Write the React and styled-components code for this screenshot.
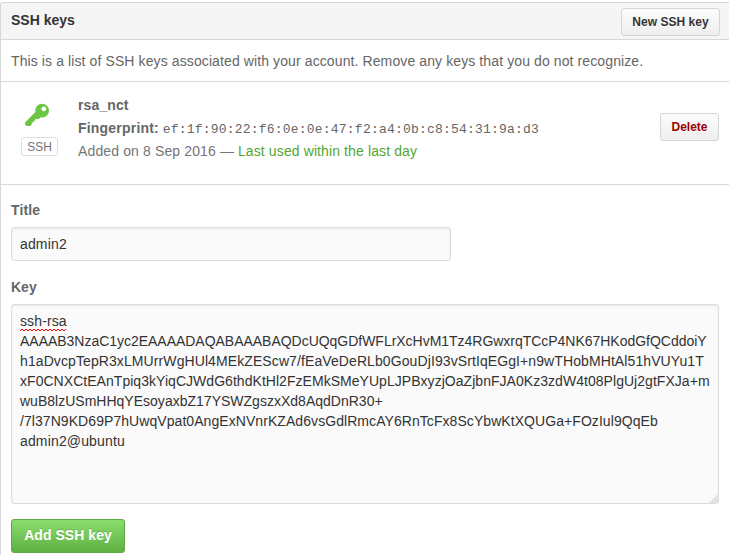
import React from "react";
import styled, { createGlobalStyle } from "styled-components";

const Global = createGlobalStyle`
  * { box-sizing: border-box; }
  body {
    margin: 0;
    background: #fff;
    overflow: hidden;
    font: 14px/23px "Liberation Sans", Arial, sans-serif;
    color: #666;
  }
`;

const Box = styled.main`
  height: 553px;
  margin-top: 2px;
  border-top: 1px solid #d8d8d8;
  border-left: 1px solid #d8d8d8;
  border-top-left-radius: 3px;
  overflow: hidden;
`;

const Header = styled.header`
  display: flex;
  justify-content: space-between;
  align-items: center;
  height: 37px;
  padding: 1px 9px 0 10px;
  background: #f5f5f5;
  border-bottom: 1px solid #d8d8d8;
`;

const Heading = styled.h1`
  margin: 0 0 2px;
  font-size: 14px;
  color: #333;
`;

const Intro = styled.p`
  margin: 0;
  height: 42px;
  padding: 0 10px;
  line-height: 42px;
  border-bottom: 1px solid #d8d8d8;
`;

const Text = styled.span`
  white-space: nowrap;
  letter-spacing: ${(p) => p.$track || 0}px;
`;

const Button = styled.button`
  width: ${(p) => p.$width}px;
  height: 28px;
  padding: 0;
  border: 1px solid #d5d5d5;
  border-radius: 3px;
  background: linear-gradient(#fcfcfc, #eee);
  color: ${(p) => (p.$danger ? "#900" : "#333")};
  font: bold 12px/20px "Liberation Sans", Arial, sans-serif;
  text-shadow: 0 1px 0 rgba(255, 255, 255, 0.9);
`;

const KeyRow = styled.section`
  display: flex;
  align-items: flex-start;
  height: 103px;
  padding: 12px 10px 0 20px;
  border-bottom: 1px solid #d8d8d8;
`;

const KeyKind = styled.div`
  display: flex;
  flex-direction: column;
  align-items: center;
  width: 37px;
  margin-right: 20px;
  padding-top: 8px;
`;

const KeyIcon = styled.svg`
  width: 24px;
  height: 27.4px;
  margin-right: 5px;
  fill: #6cc644;
`;

const Badge = styled.span`
  width: 37px;
  height: 19px;
  margin-top: 8px;
  border: 1px solid #ddd;
  border-radius: 3px;
  color: #767676;
  font-size: 12px;
  line-height: 18px;
  text-align: center;
`;

const KeyDetails = styled.div`
  flex: 1;
`;

const Detail = styled.div`
  height: 23px;
  white-space: nowrap;
`;

const Code = styled.code`
  font: 13px/20px "Liberation Mono", monospace;
  letter-spacing: 0.2px;
`;

const Muted = styled.span`
  color: #767676;
`;

const Recent = styled.span`
  color: #55a532;
`;

const DeleteSlot = styled.div`
  display: flex;
  margin-top: 19px;
`;

const Form = styled.form`
  padding: 14px 10px 0;
`;

const Label = styled.label`
  display: block;
  height: 23px;
  margin-bottom: ${(p) => p.$gap}px;
  font-weight: bold;
`;

const Input = styled.input`
  display: block;
  width: 440px;
  height: 34px;
  margin-bottom: 15px;
  padding: 0 8px;
  border: 1px solid #ddd;
  border-radius: 3px;
  background: #fafafa;
  box-shadow: inset 0 1px 2px rgba(0, 0, 0, 0.075);
  color: #333;
  font: 14px "Liberation Sans", Arial, sans-serif;
  letter-spacing: 0.15px;
  outline: none;
`;

const KeyField = styled.div`
  display: flex;
  width: 708px;
  height: 200px;
  border: 1px solid #ddd;
  border-radius: 3px;
  background: #fafafa;
  box-shadow: inset 0 1px 2px rgba(0, 0, 0, 0.075);
  color: #333;
`;

const KeyText = styled.div`
  flex: 1;
  padding: 6px 0 0 8px;
  line-height: 20px;
`;

const Line = styled.div`
  height: 20px;
  white-space: nowrap;
  letter-spacing: ${(p) => p.$track || 0}px;
`;

const Misspelled = styled.span`
  position: relative;
`;

const Squiggle = styled.svg`
  position: absolute;
  left: 0;
  bottom: -3px;
  width: 47px;
  height: 4px;
  fill: none;
  stroke: #f00;
`;

const Grip = styled.svg`
  align-self: flex-end;
  width: 8px;
  height: 8px;
  margin-left: -8px;
  fill: #e2e2e2;
`;

const Submit = styled.button`
  display: block;
  width: 114px;
  height: 34px;
  margin-top: 15px;
  padding: 0 0 2px;
  border: 1px solid #5ca941;
  border-radius: 3px;
  background: linear-gradient(#8add6d, #60b044);
  color: #fff;
  font: bold 14px/20px "Liberation Sans", Arial, sans-serif;
  text-shadow: 0 -1px 0 rgba(0, 0, 0, 0.15);
`;

const keyLines = [
  ["AAAAB3NzaC1yc2EAAAADAQABAAABAQDcUQqGDfWFLrXcHvM1Tz4RGwxrqTCcP4NK67HKodGfQCddoiY", -0.025],
  ["h1aDvcpTepR3xLMUrrWgHUl4MEkZEScw7/fEaVeDeRLb0GouDjI93vSrtIqEGgI+n9wTHobMHtAl51hVUYu1T", 0.095],
  ["xF0CNXCtEAnTpiq3kYiqCJWdG6thdKtHl2FzEMkSMeYUpLJPBxyzjOaZjbnFJA0Kz3zdW4t08PlgUj2gtFXJa+m", 0.04],
  ["wuB8lzUSmHHqYEsoyaxbZ17YSWZgszxXd8AqdDnR30+", 0.01],
  ["/7l37N9KD69P7hUwqVpat0AngExNVnrKZAd6vsGdlRmcAY6RnTcFx8ScYbwKtXQUGa+FOzIul9QqEb", 0.065],
  ["admin2@ubuntu", 0.15],
];

export default function App() {
  return (
    <>
      <Global />
      <Box>
        <Header>
          <Heading><Text>SSH keys</Text></Heading>
          <Button $width={99}><Text $track={0.05}>New SSH key</Text></Button>
        </Header>
        <Intro>
          <Text $track={0.106}>This is a list of SSH keys associated with your account. Remove any keys that you do not recognize.</Text>
        </Intro>
        <KeyRow>
          <KeyKind>
            <KeyIcon viewBox="0 0 14 16">
              <path fillRule="evenodd" d="M12.83 2.17C12.08 1.42 11.14 1.03 10 1c-1.13.03-2.08.42-2.83 1.17S6.04 3.86 6.01 5c0 .3.03.59.09.89L0 12v1l1 1h2l1-1v-1h1v-1h1v-1h2l1.09-1.11c.3.08.59.11.91.11 1.14-.03 2.08-.42 2.83-1.17S13.97 6.14 14 5c-.03-1.14-.42-2.08-1.17-2.83zM11 5.38c-.77 0-1.38-.61-1.38-1.38 0-.77.61-1.38 1.38-1.38.77 0 1.38.61 1.38 1.38 0 .77-.61 1.38-1.38 1.38z" />
            </KeyIcon>
            <Badge>SSH</Badge>
          </KeyKind>
          <KeyDetails>
            <Detail><b><Text $track={0.12}>rsa_nct</Text></b></Detail>
            <Detail>
              <b><Text $track={0.2}>Fingerprint:</Text></b> <Code>ef:1f:90:22:f6:0e:0e:47:f2:a4:0b:c8:54:31:9a:d3</Code>
            </Detail>
            <Detail>
              <Muted><Text $track={0.13}>Added on 8 Sep 2016 —</Text></Muted> <Recent><Text $track={0.11}>Last used within the last day</Text></Recent>
            </Detail>
          </KeyDetails>
          <DeleteSlot><Button $width={59} $danger><Text>Delete</Text></Button></DeleteSlot>
        </KeyRow>
        <Form>
          <Label htmlFor="title" $gap={5}><Text $track={0.15}>Title</Text></Label>
          <Input id="title" defaultValue="admin2" />
          <Label $gap={5}><Text>Key</Text></Label>
          <KeyField>
            <KeyText>
              <Line $track={0.12}>
                <Misspelled>
                  ssh-rsa
                  <Squiggle viewBox="0 0 47 4">
                    <path d="M0 3l2-2 2 2 2-2 2 2 2-2 2 2 2-2 2 2 2-2 2 2 2-2 2 2 2-2 2 2 2-2 2 2 2-2 2 2 2-2 2 2 2-2 2 2 2-2" />
                  </Squiggle>
                </Misspelled>
              </Line>
              {keyLines.map(([text, track]) => (
                <Line key={text} $track={track}>{text}</Line>
              ))}
            </KeyText>
            <Grip viewBox="0 0 8 8">
              <path d="M8 0v8H0V6h2V4h2V2h2V0z" />
            </Grip>
          </KeyField>
          <Submit type="button"><Text $track={0.05}>Add SSH key</Text></Submit>
        </Form>
      </Box>
    </>
  );
}
